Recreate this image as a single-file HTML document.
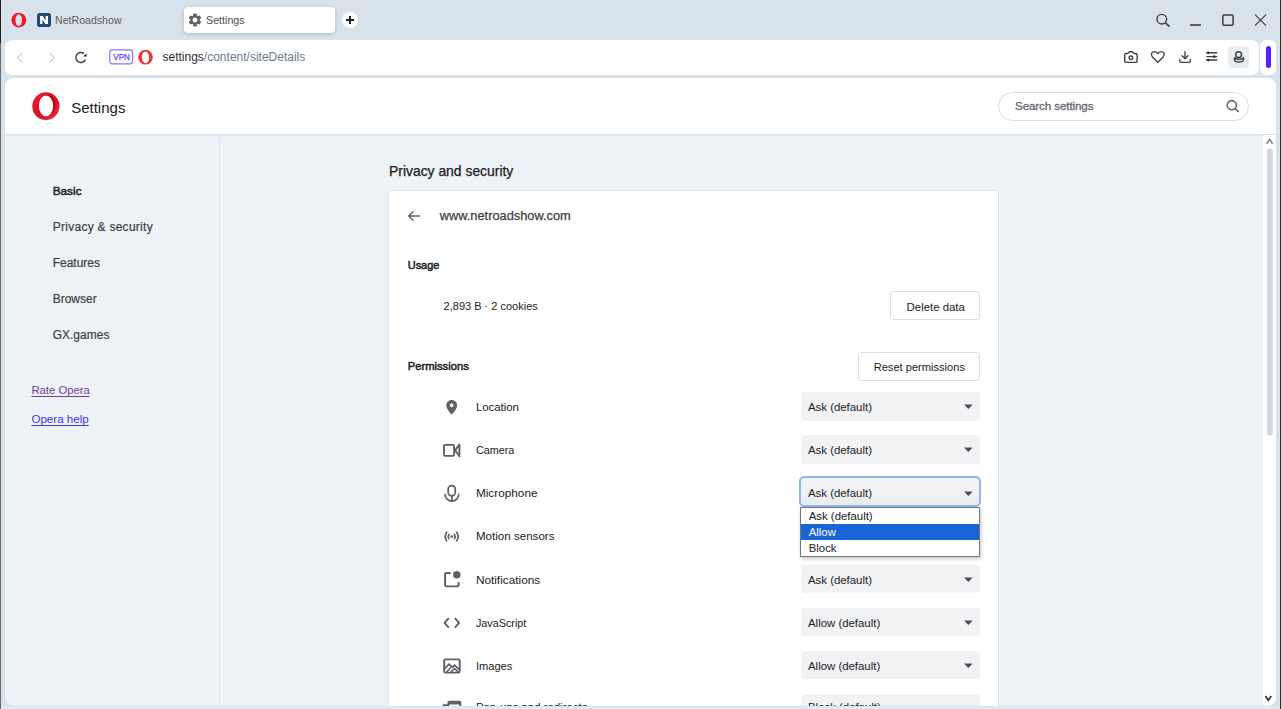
<!DOCTYPE html>
<html><head><meta charset="utf-8">
<style>
*{box-sizing:border-box;margin:0;padding:0}
html,body{width:1281px;height:709px;overflow:hidden}
body{font-family:"Liberation Sans",sans-serif;background:#d8e2ea;position:relative;color:#202124}
.a{position:absolute}
.t{position:absolute;white-space:nowrap}
u{text-decoration-thickness:1px;text-underline-offset:1.5px}
</style></head><body>
<!-- TAB BAR -->
<div id="tabbar">
  <!-- opera logo small -->
  <svg class="a" style="left:0;top:0" width="40" height="40" viewBox="0 0 40 40">
    <ellipse cx="18.8" cy="20.1" rx="7.9" ry="7.9" fill="none" stroke="#c8f2f7" stroke-width="1.2" opacity="0.8"/>
    <ellipse cx="18.8" cy="20.1" rx="7.4" ry="7.4" fill="#ff1020"/>
    <ellipse cx="18.7" cy="20.1" rx="3.4" ry="5.8" fill="#d2eef2"/>
    <ellipse cx="18.7" cy="20.1" rx="2.6" ry="5.0" fill="#d8e2ea"/>
  </svg>
  <!-- N favicon -->
  <div class="a" style="left:37px;top:13px;width:14px;height:14px;background:#1f4b74;border-radius:2.5px"></div>
  <svg class="a" style="left:34px;top:10px" width="20" height="20" viewBox="34 10 20 20"><path d="M40.1 16.1 H42.9 L45.6 20.4 V16.1 H48 V24 H45.3 L42.5 19.6 V24 H40.1 Z" fill="#fff"/></svg>
  <div class="t" style="left:55px;top:14px;font-size:10.6px;color:#5a5d61;line-height:12px">NetRoadshow</div>
  <!-- active tab -->
  <div class="a" style="left:184px;top:7px;width:151px;height:26px;background:#fff;border-radius:4px;box-shadow:0 1px 4px rgba(0,0,0,0.2)"></div>
  <svg class="a" style="left:186.5px;top:12px" width="16" height="16" viewBox="0 0 24 24"><path fill="#626262" d="M19.14 12.94c.04-.3.06-.61.06-.94 0-.32-.02-.64-.07-.94l2.03-1.58a.49.49 0 0 0 .12-.61l-1.92-3.32a.488.488 0 0 0-.59-.22l-2.39.96c-.5-.38-1.03-.7-1.62-.94l-.36-2.54a.484.484 0 0 0-.48-.41h-3.84c-.24 0-.43.17-.47.41l-.36 2.54c-.59.24-1.13.57-1.62.94l-2.39-.96c-.22-.08-.47 0-.59.22L2.74 8.87c-.12.21-.08.47.12.61l2.03 1.58c-.05.3-.09.63-.09.94s.02.64.07.94l-2.03 1.58a.49.49 0 0 0-.12.61l1.92 3.32c.12.22.37.29.59.22l2.39-.96c.5.38 1.03.7 1.62.94l.36 2.54c.05.24.24.41.48.41h3.84c.24 0 .44-.17.47-.41l.36-2.54c.59-.24 1.13-.56 1.62-.94l2.39.96c.22.08.47 0 .59-.22l1.92-3.32c.12-.22.07-.47-.12-.61l-2.01-1.58zM12 15.6c-1.98 0-3.6-1.62-3.6-3.6s1.62-3.6 3.6-3.6 3.6 1.62 3.6 3.6-1.62 3.6-3.6 3.6z"/></svg>
  <div class="t" style="left:206px;top:14px;font-size:10.7px;color:#4e4e4e;line-height:12px">Settings</div>
  <!-- plus -->
  <div class="a" style="left:342px;top:12px;width:16px;height:16px;background:#fff;border-radius:50%"></div>
  <div class="a" style="left:346px;top:19px;width:8px;height:2px;background:#1e2228"></div>
  <div class="a" style="left:349px;top:16px;width:2px;height:8px;background:#1e2228"></div>
  <!-- window controls -->
  <svg class="a" style="left:1150px;top:8px" width="130" height="24" viewBox="1150 8 130 24" fill="none" stroke="#3a3d42" stroke-width="1.4">
    <circle cx="1161.8" cy="19.2" r="4.8"/>
    <path d="M1165.3 22.7 L1169.5 26.6" stroke-width="1.6"/>
    <path d="M1190 25 H1201" stroke-width="1.6"/>
    <rect x="1222.8" y="15" width="10.3" height="10.3" rx="1.2" stroke-width="1.5"/>
    <path d="M1255 14.6 L1266 25.6 M1266 14.6 L1255 25.6" stroke-width="1.2"/>
  </svg>
</div>

<!-- ADDRESS BAR -->
<div class="a" style="left:4.7px;top:40.3px;width:1254.3px;height:34.5px;background:#fff;border-radius:7px"></div>
<div class="a" style="left:1260px;top:40px;width:16px;height:35px;background:#fff;border-radius:6px"></div>
<div class="a" style="left:1265.5px;top:46px;width:5.5px;height:21.5px;background:#5a1bff;border-radius:3px"></div>
<svg class="a" style="left:0;top:40px" width="320" height="35" viewBox="0 40 320 35" fill="none">
  <path d="M22.3 53 L17.3 57.7 L22.3 62.3" stroke="#b4b8bd" stroke-width="1"/>
  <path d="M49.5 53 L54.5 57.7 L49.5 62.3" stroke="#b4b8bd" stroke-width="1"/>
  <path d="M84 53.6 A5 5 0 1 0 85.4 59.6" stroke="#3c4046" stroke-width="1.4"/>
  <path d="M83.4 56.4 L86.5 56.4 L86.5 53.3 Z" fill="#15181c"/>
  <rect x="109.8" y="49.9" width="22.8" height="13.9" rx="2.5" stroke="#8a74ff" stroke-width="1.2"/>
</svg>
<div class="t" style="left:112px;top:52px;width:18px;text-align:center;font-size:9.4px;color:#6040ff;line-height:9.4px;transform:scaleX(0.86);-webkit-text-stroke:0.25px #6040ff">VPN</div>
<svg class="a" style="left:134px;top:46px" width="24" height="24" viewBox="134 46 24 24">
  <ellipse cx="145.5" cy="57.2" rx="7.3" ry="7.4" fill="#f23438"/>
  <ellipse cx="145.5" cy="57.3" rx="3.6" ry="5.9" fill="#fff"/>
</svg>
<div class="t" style="left:162.5px;top:51px;font-size:12px;line-height:13px;color:#2a2d31">settings<span style="color:#6b7a8c">/content/siteDetails</span></div>
<svg class="a" style="left:1120px;top:46px" width="130" height="22" viewBox="1120 46 130 22" fill="none" stroke="#3f4349" stroke-width="1.4" stroke-linejoin="round" stroke-linecap="round">
  <path d="M1124.7 55 Q1124.7 53.5 1126.2 53.5 H1127.7 L1129.3 51.8 H1132.5 L1134.1 53.5 H1135.6 Q1137.1 53.5 1137.1 55 V60.9 Q1137.1 62.4 1135.6 62.4 H1126.2 Q1124.7 62.4 1124.7 60.9 Z"/>
  <circle cx="1130.9" cy="57.8" r="1.8"/>
  <path d="M1157.8 62.3 L1152.6 57.2 Q1150.8 55.3 1151.6 53.3 Q1152.6 51.5 1154.6 51.6 Q1156.5 51.8 1157.8 53.7 Q1159.1 51.8 1161 51.6 Q1163 51.5 1164 53.3 Q1164.8 55.3 1163 57.2 Z"/>
  <path d="M1185 51.8 V58.6 M1182 55.8 L1185 58.8 L1188 55.8 M1179.8 59.5 V61.3 Q1179.8 62.4 1181 62.4 H1189 Q1190.2 62.4 1190.2 61.3 V59.5"/>
  <path d="M1206.6 52.8 H1216.8 M1206.6 60.1 H1216.8" stroke-width="1.5"/>
  <path d="M1206.6 56.6 H1216.8" stroke-width="1.1"/>
  <circle cx="1208.4" cy="52.8" r="1.3" fill="#2a2e33" stroke="none"/>
  <circle cx="1214.1" cy="56.6" r="1.3" fill="#2a2e33" stroke="none"/>
  <circle cx="1208.4" cy="60.1" r="1.3" fill="#2a2e33" stroke="none"/>
</svg>
<div class="a" style="left:1228px;top:46px;width:21px;height:21.5px;background:#e9edf2;border-radius:4px"></div>
<svg class="a" style="left:1226px;top:44px" width="26" height="26" viewBox="1226 44 26 26" fill="none" stroke="#3f4349" stroke-width="1.5">
  <circle cx="1238.6" cy="54.7" r="2.9"/>
  <path d="M1234.6 57.7 Q1233.5 62.1 1239 62.1 Q1244.5 62.1 1243.4 57.7 Q1242.6 59.3 1239 59.3 Q1235.4 59.3 1234.6 57.7 Z" stroke-linejoin="round"/>
</svg>


<div class="a" style="left:5px;top:78px;width:1271.3px;height:628px;background:#edf2f6;border-radius:9px;overflow:hidden"><div class="a" style="left:0;top:0;width:1272px;height:57px;background:#fff;border-bottom:1px solid #dbe2ea;box-shadow:0 1px 1.5px rgba(200,212,225,0.45)"></div><div class="a" style="left:214px;top:57px;width:1px;height:573px;background:#dde4ec"></div><div class="a" style="left:383px;top:112px;width:611px;height:560px;background:#fff;border:1px solid #dbe3ec;border-radius:3px"></div><div class="a" style="left:1257.8px;top:57px;width:14px;height:573px;background:#fff"></div></div><div class="a" style="left:0;top:0;width:1281px;height:706px;overflow:hidden"><svg class="a" style="left:28px;top:88px" width="36" height="36" viewBox="28 88 36 36">
<defs><linearGradient id="og" x1="0" y1="0" x2="1" y2="1"><stop offset="0" stop-color="#f21e33"/><stop offset="0.6" stop-color="#d40f24"/><stop offset="1" stop-color="#ff3a48"/></linearGradient></defs>
<ellipse cx="45.9" cy="106.2" rx="13.6" ry="13.85" fill="url(#og)"/>
<ellipse cx="47.6" cy="105.2" rx="7.9" ry="11" fill="#a80a1a" opacity="0.75"/>
<ellipse cx="46" cy="105.9" rx="7.1" ry="10.3" fill="#fff"/>
</svg><div class="t" style="left:71.2px;top:100.00px;font-size:15px;line-height:15px;color:#202124;font-weight:normal;">Settings</div>
<div class="a" style="left:998px;top:92px;width:251px;height:29px;border:1px solid #d5dde6;border-radius:15px;background:#fff"></div><div class="t" style="left:1015px;top:100.00px;font-size:11.6px;line-height:11.6px;color:#5f6670;font-weight:normal;letter-spacing:-0.1px;-webkit-text-stroke:0.3px #5f6670">Search settings</div>
<svg class="a" style="left:1224px;top:98px" width="18" height="16" viewBox="0 0 18 16" fill="none" stroke="#5b6169" stroke-width="1.6">
<circle cx="7.8" cy="7.2" r="4.6"/><path d="M11.2 10.6 L14.8 14"/></svg><div class="t" style="left:52.7px;top:186.00px;font-size:11.8px;line-height:11.8px;color:#202124;font-weight:normal;-webkit-text-stroke:0.5px #202124">Basic</div>
<div class="t" style="left:52.7px;top:221.00px;font-size:12px;line-height:12px;color:#3c4043;font-weight:normal;letter-spacing:0.27px;-webkit-text-stroke:0.2px #3c4043">Privacy &amp; security</div>
<div class="t" style="left:52.7px;top:257.00px;font-size:12px;line-height:12px;color:#3c4043;font-weight:normal;-webkit-text-stroke:0.2px #3c4043">Features</div>
<div class="t" style="left:52.7px;top:293.00px;font-size:12px;line-height:12px;color:#3c4043;font-weight:normal;-webkit-text-stroke:0.2px #3c4043">Browser</div>
<div class="t" style="left:52.7px;top:329.00px;font-size:12px;line-height:12px;color:#3c4043;font-weight:normal;-webkit-text-stroke:0.2px #3c4043">GX.games</div>
<div class="t" style="left:31.4px;top:385.00px;font-size:11.3px;line-height:11.3px;color:#6e3ea5;font-weight:normal;"><u>Rate Opera</u></div>
<div class="t" style="left:31.4px;top:413.00px;font-size:11.6px;line-height:11.6px;color:#3d36e6;font-weight:normal;"><u>Opera help</u></div>
<div class="t" style="left:389px;top:165.00px;font-size:13.9px;line-height:13.9px;color:#202124;font-weight:normal;-webkit-text-stroke:0.25px #202124">Privacy and security</div>
<svg class="a" style="left:406px;top:208px" width="16" height="16" viewBox="0 0 16 16" fill="none" stroke="#5f6368" stroke-width="1.4">
<path d="M14 8 H3 M7.5 3.3 L2.8 8 L7.5 12.7"/></svg><div class="t" style="left:439.8px;top:210.00px;font-size:12.8px;line-height:12.8px;color:#3c4043;font-weight:normal;-webkit-text-stroke:0.25px #3c4043">www.netroadshow.com</div>
<div class="t" style="left:407.8px;top:260.00px;font-size:10.9px;line-height:10.9px;color:#202124;font-weight:normal;-webkit-text-stroke:0.5px #202124">Usage</div>
<div class="t" style="left:443.6px;top:301.00px;font-size:11px;line-height:11px;color:#202124;font-weight:normal;">2,893 B · 2 cookies</div>
<div class="t" style="left:407.8px;top:361.00px;font-size:11.2px;line-height:11.2px;color:#202124;font-weight:normal;-webkit-text-stroke:0.5px #202124">Permissions</div>
<div class="a" style="left:890px;top:291px;width:90px;height:29px;border:1px solid #d8e2ec;border-radius:3px;background:#fff"></div><div class="t" style="left:906.6px;top:302.00px;font-size:11.4px;line-height:11.4px;color:#202124;font-weight:normal;">Delete data</div>
<div class="a" style="left:858px;top:352px;width:122px;height:29px;border:1px solid #d8e2ec;border-radius:3px;background:#fff"></div><div class="t" style="left:873.7px;top:362.00px;font-size:11.1px;line-height:11.1px;color:#202124;font-weight:normal;">Reset permissions</div>
<div class="t" style="left:475.9px;top:402.00px;font-size:11.4px;line-height:11.4px;color:#202124;font-weight:normal;">Location</div>
<div class="a" style="left:800.5px;top:392.0px;width:179.5px;height:28.6px;background:#f1f2f4;border-radius:4px"></div><div class="t" style="left:808px;top:402.00px;font-size:11.4px;line-height:11.4px;color:#202124;font-weight:normal;">Ask (default)</div>
<svg class="a" style="left:963px;top:404.3px" width="11" height="6" viewBox="0 0 11 6"><path d="M1.1 0.4 H9.6 L5.35 5 Z" fill="#4a4e54"/></svg><div class="t" style="left:475.9px;top:445.00px;font-size:10.8px;line-height:10.8px;color:#202124;font-weight:normal;">Camera</div>
<div class="a" style="left:800.5px;top:435.1px;width:179.5px;height:28.6px;background:#f1f2f4;border-radius:4px"></div><div class="t" style="left:808px;top:445.00px;font-size:11.4px;line-height:11.4px;color:#202124;font-weight:normal;">Ask (default)</div>
<svg class="a" style="left:963px;top:447.4px" width="11" height="6" viewBox="0 0 11 6"><path d="M1.1 0.4 H9.6 L5.35 5 Z" fill="#4a4e54"/></svg><div class="t" style="left:475.9px;top:488.00px;font-size:11.8px;line-height:11.8px;color:#202124;font-weight:normal;">Microphone</div>
<div class="a" style="left:800.5px;top:478.3px;width:179.5px;height:28.6px;background:#f1f2f4;border-radius:4px"></div><div class="t" style="left:808px;top:488.00px;font-size:11.4px;line-height:11.4px;color:#202124;font-weight:normal;">Ask (default)</div>
<svg class="a" style="left:963px;top:490.6px" width="11" height="6" viewBox="0 0 11 6"><path d="M1.1 0.4 H9.6 L5.35 5 Z" fill="#4a4e54"/></svg><div class="t" style="left:475.9px;top:530.00px;font-size:11.6px;line-height:11.6px;color:#202124;font-weight:normal;">Motion sensors</div>
<div class="a" style="left:800.5px;top:521.4px;width:179.5px;height:28.6px;background:#f1f2f4;border-radius:4px"></div><div class="t" style="left:808px;top:531.00px;font-size:11.4px;line-height:11.4px;color:#202124;font-weight:normal;">Ask (default)</div>
<svg class="a" style="left:963px;top:533.7px" width="11" height="6" viewBox="0 0 11 6"><path d="M1.1 0.4 H9.6 L5.35 5 Z" fill="#4a4e54"/></svg><div class="t" style="left:475.9px;top:575.00px;font-size:11.8px;line-height:11.8px;color:#202124;font-weight:normal;">Notifications</div>
<div class="a" style="left:800.5px;top:564.5px;width:179.5px;height:28.6px;background:#f1f2f4;border-radius:4px"></div><div class="t" style="left:808px;top:575.00px;font-size:11.4px;line-height:11.4px;color:#202124;font-weight:normal;">Ask (default)</div>
<svg class="a" style="left:963px;top:576.8px" width="11" height="6" viewBox="0 0 11 6"><path d="M1.1 0.4 H9.6 L5.35 5 Z" fill="#4a4e54"/></svg><div class="t" style="left:475.9px;top:618.00px;font-size:10.8px;line-height:10.8px;color:#202124;font-weight:normal;">JavaScript</div>
<div class="a" style="left:800.5px;top:607.6px;width:179.5px;height:28.6px;background:#f1f2f4;border-radius:4px"></div><div class="t" style="left:808px;top:618.00px;font-size:11.4px;line-height:11.4px;color:#202124;font-weight:normal;">Allow (default)</div>
<svg class="a" style="left:963px;top:619.9px" width="11" height="6" viewBox="0 0 11 6"><path d="M1.1 0.4 H9.6 L5.35 5 Z" fill="#4a4e54"/></svg><div class="t" style="left:475.9px;top:661.00px;font-size:11.1px;line-height:11.1px;color:#202124;font-weight:normal;">Images</div>
<div class="a" style="left:800.5px;top:650.8px;width:179.5px;height:28.6px;background:#f1f2f4;border-radius:4px"></div><div class="t" style="left:808px;top:661.00px;font-size:11.4px;line-height:11.4px;color:#202124;font-weight:normal;">Allow (default)</div>
<svg class="a" style="left:963px;top:663.1px" width="11" height="6" viewBox="0 0 11 6"><path d="M1.1 0.4 H9.6 L5.35 5 Z" fill="#4a4e54"/></svg><div class="t" style="left:475.9px;top:702.00px;font-size:11.4px;line-height:11.4px;color:#202124;font-weight:normal;">Pop-ups and redirects</div>
<div class="a" style="left:800.5px;top:693.9px;width:179.5px;height:28.6px;background:#f1f2f4;border-radius:4px"></div><div class="t" style="left:808px;top:702.00px;font-size:11.4px;line-height:11.4px;color:#202124;font-weight:normal;">Block (default)</div>
<svg class="a" style="left:963px;top:706.2px" width="11" height="6" viewBox="0 0 11 6"><path d="M1.1 0.4 H9.6 L5.35 5 Z" fill="#4a4e54"/></svg><svg class="a" style="left:440px;top:395px" width="24" height="320" viewBox="440 395 24 320" fill="#5f6368">
<path d="M451.7 400 C448.7 400 446.3 402.4 446.3 405.4 C446.3 409.2 451.7 414.6 451.7 414.6 C451.7 414.6 457.1 409.2 457.1 405.4 C457.1 402.4 454.7 400 451.7 400 Z M451.7 407.2 A1.8 1.8 0 1 1 451.7 403.6 A1.8 1.8 0 1 1 451.7 407.2 Z"/>
<g fill="none" stroke="#5b5f66" stroke-width="1.85" stroke-linecap="round" stroke-linejoin="round">
<rect x="443.95" y="444.8" width="10.1" height="11.1" rx="1.3"/>
<path d="M455.1 450.4 L459.4 444.5 V456.2 Z"/>
<rect x="448.15" y="485.55" width="7.1" height="10.3" rx="3.55" stroke-width="1.7"/>
<path d="M445.05 494.3 A6.85 6.85 0 0 0 458.75 494.3" stroke-width="1.7"/>
<path d="M451.9 496.5 V500.6" stroke-width="1.7"/>
<path d="M446.7 532.3 Q443.9 536.6 446.7 540.9 M456.7 532.3 Q459.5 536.6 456.7 540.9" stroke-width="1.7"/>
<path d="M448.9 534.5 Q447.7 536.6 448.9 538.7 M454.5 534.5 Q455.7 536.6 454.5 538.7" stroke-width="1.7"/>
<path d="M449.8 572.9 H446.3 Q445.1 572.9 445.1 574.1 V585.2 Q445.1 586.35 446.3 586.35 H457.4 Q458.6 586.35 458.6 585.2 V582.6" stroke-width="1.95"/>
<path d="M448.3 618.6 L444.5 622.85 L448.3 627.1 M455.3 618.6 L459.1 622.85 L455.3 627.1" stroke-width="1.85"/>
<rect x="444.15" y="659.35" width="15.55" height="13.3" rx="1.3" stroke-width="1.9"/>
<path d="M444.9 668.4 L449 664.2 L452.4 667.4 L454.6 665.1 L459.2 669.6" stroke-width="1.7"/>
<path d="M446.4 672.3 L450.6 667.8 M451.2 671.9 L454.6 668.5 L458 671.9" stroke-width="1.5"/>
<path d="M443.5 705.2 H447 M448.4 708 V702.6 Q448.4 701.6 449.4 701.6 H459.3 Q460.3 701.6 460.3 702.6 V708" stroke-width="1.9"/>
</g>
<circle cx="456.8" cy="574.7" r="3.8"/>
<circle cx="451.7" cy="536.6" r="1.4"/>
<rect x="448.4" y="701.4" width="11.9" height="3.2" rx="1"/>
</svg><div class="a" style="left:798.8px;top:476.3px;width:182.6px;height:30.6px;border:2px solid #8db6f4;border-radius:5px;background:linear-gradient(#f1f2f4 60%,#e8e9ec)"></div><div class="t" style="left:808px;top:488.00px;font-size:11.4px;line-height:11.4px;color:#202124;font-weight:normal;">Ask (default)</div>
<svg class="a" style="left:963px;top:490.6px" width="11" height="6" viewBox="0 0 11 6"><path d="M1.1 0.4 H9.6 L5.35 5 Z" fill="#4a4e54"/></svg><div class="a" style="left:800px;top:507px;width:180px;height:50px;background:#fff;border:1px solid #767676;box-shadow:1px 2px 4px rgba(0,0,0,0.22)"></div>
<div class="a" style="left:801px;top:524.2px;width:178px;height:15.6px;background:#1a65d6"></div><div class="t" style="left:808.7px;top:511.00px;font-size:11.4px;line-height:11.4px;color:#202124;font-weight:normal;">Ask (default)</div>
<div class="t" style="left:808.7px;top:527.00px;font-size:11.4px;line-height:11.4px;color:#fff;font-weight:normal;">Allow</div>
<div class="t" style="left:808.7px;top:543.00px;font-size:11.4px;line-height:11.4px;color:#202124;font-weight:normal;">Block</div>
<svg class="a" style="left:1262px;top:134px" width="14" height="572" viewBox="1262 134 14 572">
<path d="M1266.6 144 L1269.6 139.2 L1272.6 144" fill="none" stroke="#8a8a8a" stroke-width="1.6"/>
<rect x="1266.9" y="148.6" width="6" height="287.2" rx="3" fill="#cfd8e0"/>
<path d="M1265.4 696 L1268.3 700.2 L1271.2 696" fill="none" stroke="#333" stroke-width="1.8"/>
</svg></div><div class="a" style="left:1px;top:707px;width:1279px;height:2px;background:#e2ebf4"></div>
<div class="a" style="left:0;top:0;width:1px;height:43px;background:#1f1f1f"></div>
<div class="a" style="left:0;top:43px;width:1px;height:666px;background:#6b6b6b"></div>
<div class="a" style="left:1280px;top:0;width:1px;height:709px;background:#2a2a2a"></div>
</body></html>
